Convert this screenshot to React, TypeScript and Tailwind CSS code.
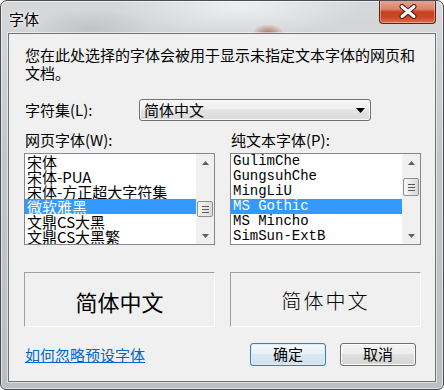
import React from "react";

const cjk = "font-['Noto_Sans_CJK_SC',sans-serif]";
const mono = "font-['Liberation_Mono','Noto_Sans_CJK_SC',monospace]";

function Arrow({ down }: { down?: boolean }) {
  return (
    <svg width="7" height="4" viewBox="0 0 7 4">
      {down ? (
        <polygon points="0,0 7,0 3.5,4" fill="#5f5f5f" />
      ) : (
        <polygon points="0,4 3.5,0 7,4" fill="#5f5f5f" />
      )}
    </svg>
  );
}

function ScrollBar({ thumb }: { thumb: string }) {
  return (
    <div className="w-[18px] h-full flex flex-col bg-[#f0f0f0]">
      <div className="h-[17px] flex items-center justify-center">
        <Arrow />
      </div>
      <div className="flex-1 flex flex-col">
        <div
          className={`${thumb} mx-auto w-[16px] rounded-[2px] border border-[#8e8f8f] bg-[linear-gradient(to_right,#f6f6f6,#e9e9e9_50%,#dadada)] flex items-center justify-center`}
        >
          <div className="flex flex-col gap-[2px]">
            <div className="w-[7px] h-[1px] bg-[#5a5a5a]" />
            <div className="w-[7px] h-[1px] bg-[#5a5a5a]" />
            <div className="w-[7px] h-[1px] bg-[#5a5a5a]" />
          </div>
        </div>
      </div>
      <div className="h-[17px] flex items-center justify-center">
        <Arrow down />
      </div>
    </div>
  );
}

function ListBox({
  items,
  selected,
  thumb,
  font,
}: {
  items: string[];
  selected: number;
  thumb: string;
  font: string;
}) {
  return (
    <div className="h-[92px] border border-[#828790] bg-white flex">
      <div className="flex-1 flex flex-col overflow-hidden">
        {items.map((t, i) => (
          <div
            key={t}
            className={
              i === selected
                ? `${font} h-[15px] leading-[15px] pl-[2px] whitespace-nowrap bg-[#3399ff] text-white`
                : `${font} h-[15px] leading-[15px] pl-[2px] whitespace-nowrap text-black`
            }
          >
            {t}
          </div>
        ))}
      </div>
      <ScrollBar thumb={thumb} />
    </div>
  );
}

function Btn({ children, def }: { children: React.ReactNode; def?: boolean }) {
  return (
    <div
      className={
        def
          ? `${cjk} w-[76px] h-[23px] rounded-[3px] border border-[#3c7fb1] bg-[linear-gradient(to_bottom,#f5f9fc_0%,#e9f2f8_45%,#dbe8f1_50%,#d0e2ee_100%)] shadow-[inset_0_0_0_1px_#d6ecf8] flex items-center justify-center text-[15px] text-black`
          : `${cjk} w-[76px] h-[23px] rounded-[3px] border border-[#707070] bg-[linear-gradient(to_bottom,#f4f4f4_0%,#ededed_45%,#e0e0e0_50%,#d5d5d5_100%)] shadow-[inset_0_0_0_1px_#fcfcfc] flex items-center justify-center text-[15px] text-black`
      }
    >
      {children}
    </div>
  );
}

export default function App() {
  return (
    <div className="w-[444px] h-[390px] bg-white">
      <div className="relative w-[444px] h-[390px] flex flex-col rounded-t-[7px] rounded-b-[6px] border border-[#4a4e54] overflow-hidden shadow-[inset_0_0_0_1px_rgba(255,255,255,0.55)] bg-[radial-gradient(ellipse_16px_10px_at_267px_33px,rgba(160,60,45,0.7),rgba(160,60,45,0)),radial-gradient(ellipse_120px_30px_at_240px_6px,rgba(255,255,255,0.6),rgba(255,255,255,0)),radial-gradient(ellipse_60px_20px_at_90px_28px,rgba(120,120,120,0.2),rgba(120,120,120,0)),linear-gradient(to_bottom,#d7d8da,#c4c6c9_40%,#bcbec1)]">
        {/* Title bar */}
        <div
          className={`${cjk} h-[32px] flex items-center pl-[8px] pt-[4px] text-[15px] text-black [text-shadow:0_0_6px_#fff,0_0_3px_#fff]`}
        >
          字体
        </div>

        {/* Close button */}
        <div className="absolute right-[7px] top-[-1px] w-[57px] h-[24px] rounded-b-[4px] border border-t-0 border-[#5e2317] bg-[linear-gradient(to_bottom,#e7a797_0%,#dc8069_40%,#c4401f_52%,#cb4526_75%,#de6f50_100%)] shadow-[inset_0_0_0_1px_rgba(255,210,190,0.5)] flex items-center justify-center">
          <svg width="18" height="15" viewBox="0 0 18 15">
            <path d="M3 2.5 L15 12.5 M15 2.5 L3 12.5" stroke="#4a1a10" strokeWidth="5" strokeLinecap="round" />
            <path d="M3 2.5 L15 12.5 M15 2.5 L3 12.5" stroke="#ffffff" strokeWidth="3" strokeLinecap="round" />
          </svg>
        </div>

        {/* Client area */}
        <div className="mx-[7px] h-[349px] border border-[#70747a] bg-[#f0f0f0] flex flex-col pl-[15px] pr-[14px] pt-[12px] shadow-[0_0_0_1px_rgba(255,255,255,0.5)]">
          <div className={`${cjk} pl-[1px] text-[15px] leading-[18px] text-black`}>
            您在此处选择的字体会被用于显示未指定文本字体的网页和文档。
          </div>

          <div className="mt-[17px] flex items-center h-[22px]">
            <div className={`${cjk} pl-[1px] w-[115px] text-[15px] leading-[18px] text-black`}>
              字符集(L):
            </div>
            <div className="w-[232px] h-[22px] rounded-[3px] border border-[#707070] bg-[linear-gradient(to_bottom,#f7f7f7_0%,#efefef_45%,#e4e4e4_50%,#dadada_100%)] shadow-[inset_0_0_0_1px_#fbfbfb] flex items-center justify-between pl-[4px] pr-[5px]">
              <span className={`${cjk} text-[15px] leading-[18px] text-black`}>简体中文</span>
              <svg width="9" height="5" viewBox="0 0 9 5">
                <polygon points="0,0 9,0 4.5,5" fill="#000" />
              </svg>
            </div>
          </div>

          <div className="mt-[10px] grid grid-cols-2 gap-x-[15px]">
            <div className="flex flex-col">
              <div className={`${cjk} pl-[1px] h-[18px] text-[15px] leading-[18px] text-black`}>
                网页字体(W):
              </div>
              <div className="mt-[4px]">
                <ListBox
                  font={`${cjk} text-[15px]`}
                  items={["宋体", "宋体-PUA", "宋体-方正超大字符集", "微软雅黑", "文鼎CS大黑", "文鼎CS大黑繁"]}
                  selected={3}
                  thumb="mt-[30px] h-[16px]"
                />
              </div>
              <div className="mt-[27px] h-[55px] border border-t-[#a0a0a0] border-l-[#a0a0a0] border-r-white border-b-white flex items-center justify-center pt-[3px]">
                <span className={`${cjk} text-[22px] leading-[28px] text-black`}>简体中文</span>
              </div>
            </div>
            <div className="flex flex-col">
              <div className={`${cjk} pl-[1px] h-[18px] text-[15px] leading-[18px] text-black`}>
                纯文本字体(P):
              </div>
              <div className="mt-[4px]">
                <ListBox
                  font={`${mono} text-[14px]`}
                  items={["GulimChe", "GungsuhChe", "MingLiU", "MS Gothic", "MS Mincho", "SimSun-ExtB"]}
                  selected={3}
                  thumb="mt-[7px] h-[18px]"
                />
              </div>
              <div className="mt-[27px] h-[55px] border border-t-[#a0a0a0] border-l-[#a0a0a0] border-r-white border-b-white flex items-center justify-center pt-[3px]">
                <span className={`${cjk} text-[20px] leading-[28px] font-light tracking-[2px] text-black`}>简体中文</span>
              </div>
            </div>
          </div>

          <div className="mt-[16px] h-[23px] flex items-center justify-between">
            <span className={`${cjk} pl-[1px] text-[15px] leading-[18px] text-[#0066cc] underline`}>
              如何忽略预设字体
            </span>
            <div className="flex gap-[14px] mr-[5px]">
              <Btn def>确定</Btn>
              <Btn>取消</Btn>
            </div>
          </div>
        </div>
      </div>
    </div>
  );
}
